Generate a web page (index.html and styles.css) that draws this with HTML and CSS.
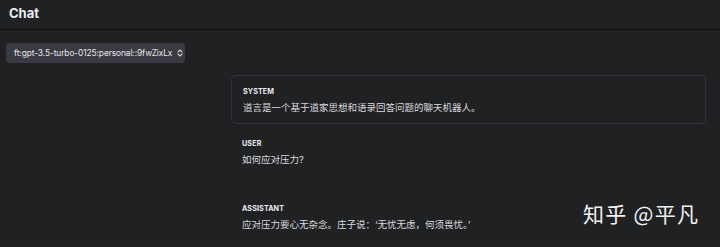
FILE: index.html
```html
<!DOCTYPE html>
<html lang="zh">
<head>
<meta charset="utf-8">
<link rel="stylesheet" href="styles.css">
</head>
<body>
<header class="topbar"><h1 class="title">Chat</h1></header>
<div class="content">
  <div class="toolbar">
    <div class="select">ft:gpt-3.5-turbo-0125:personal::9fwZixLx
      <svg class="chev" width="8" height="10" viewBox="0 0 8 10"><path d="M2 4 L4 2 L6 4 M2 6 L4 8 L6 6" fill="none" stroke="#c9cacf" stroke-width="1.1" stroke-linecap="round" stroke-linejoin="round"/></svg>
    </div>
  </div>
  <div class="messages">
    <div class="msg system">
      <div class="role">SYSTEM</div>
      <div class="text">道言是一个基于道家思想和语录回答问题的聊天机器人。</div>
    </div>
    <div class="msg user">
      <div class="role">USER</div>
      <div class="text">如何应对压力?</div>
    </div>
    <div class="msg assistant">
      <div class="role">ASSISTANT</div>
      <div class="text">应对压力要心无杂念。庄子说：‘无忧无虑，何须畏忧。’</div>
    </div>
  </div>
</div>
<div class="watermark">知乎 @平凡</div>
</body>
</html>
```

FILE: styles.css
```css
html, body {
  margin: 0;
  padding: 0;
  background: #202123;
  width: 720px;
  height: 247px;
  overflow: hidden;
  font-family: Inter, "Noto Sans CJK SC", sans-serif;
  color: #d9d9de;
}
.topbar {
  height: 30px;
  border-bottom: 1px solid #0e0e10;
  display: flex;
  align-items: center;
  padding-left: 9px;
  box-sizing: border-box;
}
.title {
  margin: 0;
  font-size: 13px;
  font-weight: 700;
  color: #ececf1;
  position: relative;
  top: -2px;
}
.content {
  padding: 10px 0 0 6px;
}
.select {
  display: inline-flex;
  align-items: center;
  gap: 4px;
  height: 20px;
  width: 179px;
  box-sizing: border-box;
  padding: 0 0 0 8px;
  background: #3a3b42;
  border-radius: 4px;
  font-size: 8.4px;
  color: #e6e6ea;
  letter-spacing: -0.1px;
  white-space: nowrap;
}
.chev { flex: none; }
.messages {
  margin-left: 225px;
  margin-top: 12px;
  width: 475px;
}
.msg {
  padding: 11px 11px 0 11px;
}
.system {
  border: 1px solid #34353b;
  border-radius: 5px;
  height: 49px;
  box-sizing: border-box;
  padding-top: 11px;
}
.user {
  padding-top: 15px;
  height: 68px;
  box-sizing: border-box;
}
.assistant {
  padding-top: 12px;
}
.role {
  font-size: 7.2px;
  font-weight: 700;
  color: #ececf1;
  letter-spacing: 0.1px;
  line-height: 10px;
}
.text {
  font-size: 9.5px;
  line-height: 15px;
  margin-top: 3px;
  color: #dadade;
}
.watermark {
  position: absolute;
  left: 583px;
  top: 199px;
  font-size: 21px;
  line-height: 28px;
  color: #f2f2f2;
  font-family: "Noto Sans CJK SC", sans-serif;
  letter-spacing: 1.3px;
}
```
